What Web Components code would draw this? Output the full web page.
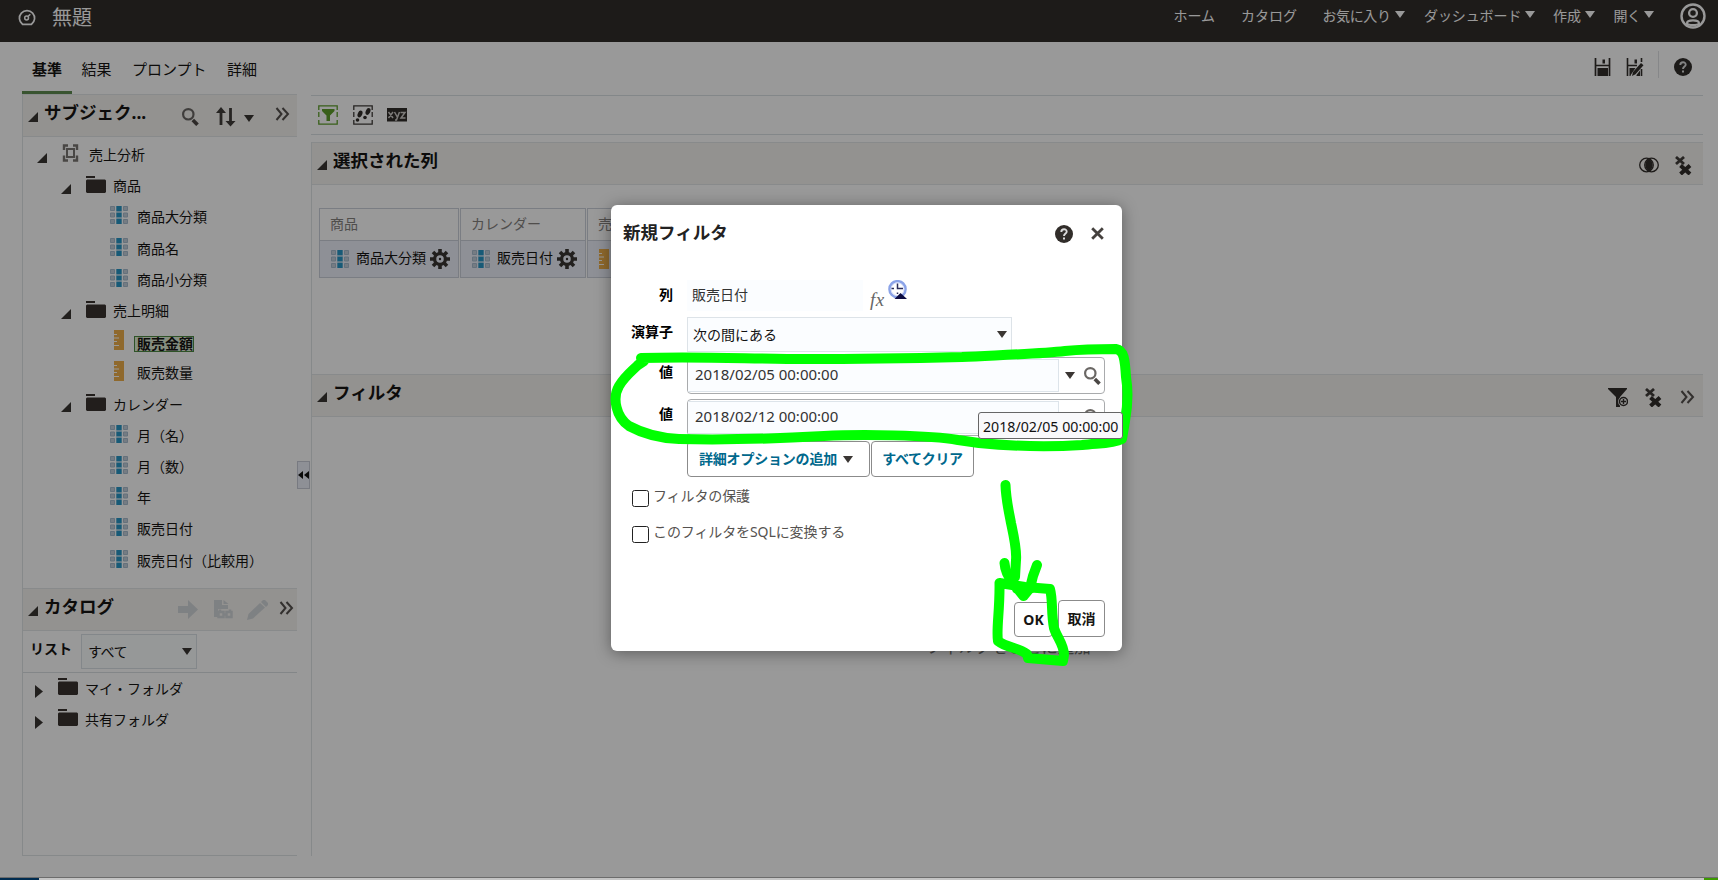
<!DOCTYPE html>
<html lang="ja">
<head>
<meta charset="utf-8">
<title>無題</title>
<style>
  html, body { margin: 0; height: 880px; overflow: hidden; background: #fff; }
  body { font: 14px/20px "Noto Sans", "Noto Sans CJK JP", sans-serif; color: #161513; }
</style>
</head>
<body>
<analysis-app></analysis-app>

<script>
const ICONS = {
  gauge: [18, 17, '<path d="M4.5 15.3A7.6 7.6 0 1 1 13.5 15.3Z" fill="none" stroke="#fff" stroke-width="1.7"/><circle cx="8.6" cy="9" r="1.9" fill="none" stroke="#fff" stroke-width="1.5"/><path d="M10 7.500l2.300-2.300" stroke="#fff" stroke-width="1.6"/>'],
  user: [26, 26, '<circle cx="13" cy="13" r="11.500" fill="none" stroke="#fff" stroke-width="2.400"/><circle cx="13" cy="10" r="3.900" fill="none" stroke="#fff" stroke-width="2.300"/><path d="M7 20.300c0-4 12-4 12 0-1 2.400-11 2.400-12 0z" fill="none" stroke="#fff" stroke-width="2.200"/>'],
  save: [18, 18, '<path d="M1.500 0v18M15.500 0v18M1 7.500h15" stroke="#312d2a" stroke-width="1.700"/><path d="M8.500 1.500h2.500v4H8.500zM3.500 10h10.500v8H3.500z" fill="#312d2a"/>'],
  saveas: [18, 18, '<path d="M1.500 0v18M15.500 0v4M15.500 11v7M1 7.500h10" stroke="#312d2a" stroke-width="1.600"/><path d="M8.500 1.500h2.500v4H8.500zM3.500 10h6L5 16.500 4.500 18h-1z" fill="#312d2a"/><path d="M6 18l1-4 8-9 2.500 2.200-8 9zM10.500 17l3.500-4.500V18h-3.500z" fill="#312d2a"/>'],
  help: [18, 18, '<circle cx="9" cy="9" r="9" fill="#312d2a"/><path d="M6.300 7c0-3.700 5.600-3.500 5.400-.3C11.600 8.500 9 8.500 9 11" fill="none" stroke="#ddd" stroke-width="1.900"/><path d="M8 12.500h2v2H8z" fill="#ddd"/>'],
  search: [17, 18, '<circle cx="6.300" cy="6.300" r="5.200" fill="none" stroke="#6a6764" stroke-width="2.200"/><path d="M10.800 12l4.700 4.800" stroke="#4b4744" stroke-width="3.600"/>'],
  sort: [20, 20, '<path d="M5 18V3M14.500 1v16" stroke="#403c39" stroke-width="2.800"/><path d="M0 6L5 0l5 6zM9.500 14l5 5.500 5-5.500z" fill="#403c39"/>'],
  down: [10, 7, '<path d="M0 0h10L5 7z" fill="#3a3633"/>'],
  downw: [11, 7, '<path d="M0 0h10L5 7z" fill="#fff"/>'],
  more: [15, 14, '<path d="M1.500 1l5 6-5 6M7.500 1l5.500 6-5.500 6" fill="none" stroke="#55514e" stroke-width="2"/>'],
  open: [10, 10, '<path d="M10 0v10H0z" fill="#3a3633"/>'],
  shut: [8, 13, '<path d="M0 0l8 6.500L0 13z" fill="#3a3633"/>'],
  cube: [18, 18, '<path d="M2 6V1.500h4M11 1.500h4V6M15 11.500V16.500h-4M6 16.500H2v-5" fill="none" stroke="#7b7773" stroke-width="2.400"/><path d="M5 5h7v8H5z" fill="none" stroke="#7b7773" stroke-width="2"/>'],
  folder: [20, 17, '<path d="M0 0h9v2H0zM1 3.500h18l1 1V16l-1 1H1l-1-1V4.500z" fill="#3a3330"/>'],
  column: [18, 18, [0, 6.5, 13].map(y => `<path d="M.5 ${y + .5}h4v4h-4zM13.500 ${y + .5}h4v4h-4z" fill="#c3cfda" stroke="#a8bdcf"/><path d="M6.300 ${y}h5.400v5h-5.400z" fill="#2797c6"/>`).join('') + '<path d="M6.300 5h5.400v1.500H6.300zM6.300 11.500h5.400v1.500H6.300z" fill="#a3cfe6"/>'],
  ruler: [10, 20, '<path d="M0 0h10v20H0z" fill="#eeb04c"/><path d="M0 4.500h3M0 8h5M0 11.500h3M0 15.500h5" stroke="#fff" stroke-width="1.200"/>'],
  goto: [20, 19, '<path d="M0 6h10V0l10 9.500L10 19v-6H0z" fill="#d3d7da"/>'],
  preview: [20, 20, '<path d="M0 0h8v5h6v4H4v8H0z" fill="#d3d7da"/><path d="M9.500 0l5 4h-5z" fill="#d3d7da"/><path d="M4.500 12h5v5h-5zM12.500 12h5v5h-5zM6 12V9.500M16 12V9.500M9 14.500h4" fill="none" stroke="#d3d7da" stroke-width="2.500"/>'],
  pencil: [21, 20, '<path d="M0 20l1.500-6L13 3l5 4.500L6 18.500zM14 2l2-2h2l3 3v2l-2 2z" fill="#d3d7da"/>'],
  filter: [20, 20, '<path d="M.8 5V.8h18.400V5M.8 15v4.200h18.400V15M.8 7v5M19.200 7v5" fill="none" stroke="#5f9f2c" stroke-width="1.300"/><path d="M4 4h12.500v2L12 10.500V16H8.500v-5.500L4 6z" fill="#5f9f2c"/>'],
  steps: [20, 20, '<path d="M.8 5V.8h18.400V5M.8 15v4.200h18.400V15M.8 7v5M19.200 7v5" fill="none" stroke="#403c39" stroke-width="1.300"/><g fill="#312d2a"><ellipse cx="7" cy="9" rx="2.200" ry="3.500" transform="rotate(25 7 9)"/><ellipse cx="15" cy="6.500" rx="2.200" ry="3.500" transform="rotate(25 15 6.500)"/><circle cx="4.500" cy="15" r="1.800"/><circle cx="12" cy="12.500" r="1.800"/></g>'],
  xyz: [20, 14, '<path d="M0 0h20v13.500H0z" fill="#312d2a"/><path d="M1.500 4l4.500 6M6 4l-4.500 6M7.500 4l2.800 5M12.500 4L9.500 12H8M13.500 4.500h4.500L14 10h4.500" fill="none" stroke="#d0cdca" stroke-width="1.500"/>'],
  venn: [20, 16, '<circle cx="7.500" cy="8" r="6.800" fill="none" stroke="#312d2a" stroke-width="1.300"/><circle cx="12.500" cy="8" r="6.800" fill="none" stroke="#312d2a" stroke-width="1.300"/><path d="M10 1.800c5 3 5 9.400 0 12.400-5-3-5-9.400 0-12.400z" fill="#312d2a"/>'],
  clear: [17, 19, '<path d="M1 1l8 7M9 1L1 8" stroke="#403c39" stroke-width="2.800"/><path d="M5.500 9.500l9.500 8.500M15 9.500L5.500 18" stroke="#312d2a" stroke-width="4"/>'],
  gear: [20, 20, '<circle cx="10" cy="10" r="5.400" fill="none" stroke="#3a3633" stroke-width="3.300"/><path d="M10 0v4M10 16v4M0 10h4M16 10h4M3 3l3 3M14 14l3 3M17 3l-3 3M6 14l-3 3" stroke="#3a3633" stroke-width="3.600"/><circle cx="10" cy="10" r="1.200" fill="#312d2a"/>'],
  funnel: [20, 20, '<path d="M0 0h19v1l-7 8v10H8V9L0 1z" fill="#312d2a"/><circle cx="15.500" cy="13.500" r="5.400" fill="#f5f4f2"/><circle cx="15.500" cy="13.500" r="4" fill="none" stroke="#312d2a" stroke-width="1.500"/><path d="M13 13.500h5M15.500 11v5" stroke="#312d2a" stroke-width="1.400"/>'],
  close: [13, 13, '<path d="M1.200 1.200l10.600 10.600M11.800 1.200L1.200 11.800" stroke="#45413e" stroke-width="2.800"/>'],
  clock: [19, 19, '<circle cx="9.500" cy="9.200" r="8" fill="#fff" stroke="#8ba3e8" stroke-width="2.600"/><circle cx="9.500" cy="9.200" r="6.500" fill="none" stroke="#d5ddf8"/><path d="M9.500 3.500v5h5.500M3.500 8.500h2.500M9.500 14v-1.500" fill="none" stroke="#2b2c5a" stroke-width="1.500"/><path d="M6.500 19l6-6 6.500 6z" fill="#0c0c42"/>'],
  splitter: [11, 8, '<path d="M5 0v8L0 4zM11 0v8L6 4z" fill="#111"/>']
};

function define(name, render) {
  customElements.define(name, class extends HTMLElement {
    constructor() {
      super();
      this.attachShadow({ mode: "open" });
    }
    connectedCallback() {
      this.shadowRoot.innerHTML = render(this);
    }
  });
}

define("ui-icon", (el) => {
  const [w, h, body] = ICONS[el.getAttribute("name")];
  return `
    <style>:host { display: block; flex: none; width: ${w}px; height: ${h}px; } svg { display: block; }</style>
    <svg width="${w}" height="${h}" viewBox="0 0 ${w} ${h}">${body}</svg>`;
});

define("nav-item", (el) => `
  <style>
    :host { display: flex; align-items: center; box-sizing: border-box; flex: none; white-space: nowrap; color: #fff; }
    ui-icon { margin: -3px 0 0 4px; }
  </style>
  <slot></slot>${el.hasAttribute("menu") ? '<ui-icon name="downw"></ui-icon>' : ""}`);

define("app-header", () => `
  <style>
    :host { display: flex; height: 42px; box-sizing: border-box; background: #312d2a; padding: 0 12px 10px 18px; align-items: center; }
    h1 { margin: 3px auto 0 16px; font-size: 20px; font-weight: 400; line-height: 24px; color: #fff; }
    ui-icon[name=gauge] { margin-top: 3px; }
    ui-icon[name=user] { margin-top: -1px; }
    .w1 { width: 67.500px; } .w2 { width: 81.500px; }
    .w3 { width: 101.500px; letter-spacing: -.4px; } .w4 { width: 129px; letter-spacing: -.1px; }
    .w5 { width: 60.500px; } .w6 { width: 66.500px; letter-spacing: -.6px; }
    nav { display: flex; }
  </style>
  <ui-icon name="gauge"></ui-icon>
  <h1>無題</h1>
  <nav>
    <nav-item class="w1">ホーム</nav-item>
    <nav-item class="w2">カタログ</nav-item>
    <nav-item class="w3" menu>お気に入り</nav-item>
    <nav-item class="w4" menu>ダッシュボード</nav-item>
    <nav-item class="w5" menu>作成</nav-item>
    <nav-item class="w6" menu>開く</nav-item>
  </nav>
  <ui-icon name="user"></ui-icon>`);

define("tab-bar", () => `
  <style>
    :host { display: flex; height: 52px; box-sizing: border-box; padding: 0 26px 0 22px; font-size: 15px; }
    span { height: 52px; box-sizing: border-box; line-height: 54px; margin-right: 20.500px; white-space: nowrap; }
    .on { width: 50px; margin-right: 9.500px; text-align: center; font-weight: 700; border-bottom: 3px solid #5f8c50; }
    .tools { display: flex; align-items: center; margin-left: auto; padding-bottom: 3px; }
    i { width: 1px; height: 27px; background: #dfe2e4; margin: -4px 15px 0 14px; }
  </style>
  <span class="on">基準</span><span>結果</span><span>プロンプト</span><span>詳細</span>
  <div class="tools">
    <ui-icon name="save"></ui-icon>
    <ui-icon name="saveas" style="margin-left:14px"></ui-icon>
    <i></i>
    <ui-icon name="help"></ui-icon>
  </div>`);

define("section-head", () => `
  <style>
    :host { display: flex; align-items: center; height: 43px; box-sizing: border-box; padding: 0 9px 0 5px; background: #f5f3f0; border: solid #e3e6e8; border-width: 1px 0; }
    ui-icon { margin: 2px 6px 0 0; }
    b { font-size: 17.500px; line-height: 24px; padding-bottom: 7px; white-space: nowrap; }
    .tools { display: flex; align-items: center; margin-left: auto; }
  </style>
  <ui-icon name="open"></ui-icon>
  <b><slot></slot></b>
  <div class="tools"><slot name="tools"></slot></div>`);

define("tree-row", (el) => {
  const kind = el.getAttribute("kind");
  const leaf = kind === "column" || kind === "ruler";
  return `
    <style>
      :host { display: flex; align-items: center; height: 31.200px; box-sizing: border-box; white-space: nowrap; padding-left: ${el.getAttribute("indent")}px; }
      .tw { width: ${leaf ? 0 : el.hasAttribute("closed") ? 23 : 25}px; display: flex; margin-top: 5px; }
      .ic { width: 27px; display: flex; justify-content: ${kind === "ruler" ? "center" : "flex-start"}; margin-top: -4px; }
      .ruler { box-sizing: border-box; padding-right: 9px; }
      .mark { font-weight: 700; line-height: 14px; height: 14px; border: 1px solid #4f8a44; background: #dfeed6; padding-left: 2px; margin: 3px 0 0 -3px; }
    </style>
    <div class="tw">${leaf ? "" : `<ui-icon name="${el.hasAttribute("closed") ? "shut" : "open"}"></ui-icon>`}</div>
    <div class="ic ${kind}"><ui-icon name="${kind}"></ui-icon></div>
    <span class="${el.hasAttribute("marked") ? "mark" : ""}"><slot></slot></span>`;
});

define("subject-pane", () => `
  <style>
    :host { display: flex; flex-direction: column; height: 494px; box-sizing: border-box; border-left: 1px solid #e0e4e6; }
    section-head { flex: none; }
    .tree { padding-top: 2.500px; }
  </style>
  <section-head>サブジェク...
    <ui-icon slot="tools" name="search" style="margin-top:2px"></ui-icon>
    <ui-icon slot="tools" name="sort" style="margin:2px 0 0 17px"></ui-icon>
    <ui-icon slot="tools" name="down" style="margin:5px 0 0 8px"></ui-icon>
    <ui-icon slot="tools" name="more" style="margin:-3px -2px 0 21px"></ui-icon>
  </section-head>
  <div class="tree">
    <tree-row kind="cube" indent="14">売上分析</tree-row>
    <tree-row kind="folder" indent="38">商品</tree-row>
    <tree-row kind="column" indent="87">商品大分類</tree-row>
    <tree-row kind="column" indent="87">商品名</tree-row>
    <tree-row kind="column" indent="87">商品小分類</tree-row>
    <tree-row kind="folder" indent="38">売上明細</tree-row>
    <tree-row kind="ruler" indent="87" marked>販売金額</tree-row>
    <tree-row kind="ruler" indent="87">販売数量</tree-row>
    <tree-row kind="folder" indent="38">カレンダー</tree-row>
    <tree-row kind="column" indent="87">月（名）</tree-row>
    <tree-row kind="column" indent="87">月（数）</tree-row>
    <tree-row kind="column" indent="87">年</tree-row>
    <tree-row kind="column" indent="87">販売日付</tree-row>
    <tree-row kind="column" indent="87">販売日付（比較用）</tree-row>
  </div>`);

define("catalog-pane", () => `
  <style>
    :host { display: flex; flex-direction: column; height: 268px; box-sizing: border-box; border: solid #e0e4e6; border-width: 0 0 1px 1px; }
    section-head { flex: none; }
    .list { display: flex; height: 42px; box-sizing: border-box; border-bottom: 1px solid #dbe0e3; padding: 3px 0 0 7px; }
    b { width: 51px; line-height: 29px; }
    .sel { display: flex; align-items: center; width: 116px; height: 35px; box-sizing: border-box; padding: 0 4px 0 6px; justify-content: space-between; border: 1px solid #dbe1e6; background: #fbfdfe; letter-spacing: -.5px; }
    .tree { padding-top: 0; }
  </style>
  <section-head>カタログ
    <ui-icon slot="tools" name="goto"></ui-icon>
    <ui-icon slot="tools" name="preview" style="margin-left:16px"></ui-icon>
    <ui-icon slot="tools" name="pencil" style="margin-left:13px"></ui-icon>
    <ui-icon slot="tools" name="more" style="margin:-4px -6px 0 11px"></ui-icon>
  </section-head>
  <div class="list"><b>リスト</b><div class="sel">すべて<ui-icon name="down"></ui-icon></div></div>
  <div class="tree">
    <tree-row kind="folder" closed indent="12">マイ・フォルダ</tree-row>
    <tree-row kind="folder" closed indent="12">共有フォルダ</tree-row>
  </div>`);

define("column-card", (el) => `
  <style>
    :host { display: block; width: ${el.getAttribute("width")}px; height: 70px; box-sizing: border-box; border: 1px solid #ccd1da; flex: none; white-space: nowrap; overflow: hidden; }
    .top { height: 32px; line-height: 30px; box-sizing: border-box; padding-left: 10px; border-bottom: 1px solid #ccd1da; color: #85827f; }
    .bot { display: flex; align-items: center; height: 36px; background: #edf1fa; padding-left: 11px; }
    .bot span { padding: 0 4px 3px 7px; }
  </style>
  <div class="top">${el.getAttribute("folder")}</div>
  <div class="bot"><ui-icon name="${el.getAttribute("kind")}"></ui-icon>${el.textContent ? '<span><slot></slot></span><ui-icon name="gear"></ui-icon>' : ""}</div>`);

define("criteria-pane", () => `
  <style>
    :host { display: block; height: 762px; }
    .bar { display: flex; align-items: center; height: 40px; box-sizing: border-box; border: solid #dbe1e4; border-width: 1px 0; margin-top: 1px; padding-left: 7px; gap: 15px; }
    .body { border-left: 1px solid #e0e4e6; margin-top: 7px; height: 714px; }
    .cards { display: flex; gap: 1px; height: 189px; box-sizing: border-box; padding: 23px 0 0 7px; }
  </style>
  <div class="bar"><ui-icon name="filter"></ui-icon><ui-icon name="steps"></ui-icon><ui-icon name="xyz" style="margin-left:-1px"></ui-icon></div>
  <div class="body">
    <section-head>選択された列
      <ui-icon slot="tools" name="venn" style="margin-top:2px"></ui-icon>
      <ui-icon slot="tools" name="clear" style="margin:4px 2px 0 16px"></ui-icon>
    </section-head>
    <div class="cards">
      <column-card width="140" folder="商品" kind="column">商品大分類</column-card>
      <column-card width="126" folder="カレンダー" kind="column">販売日付</column-card>
      <column-card width="60" folder="売" kind="ruler"></column-card>
    </div>
    <section-head>フィルタ
      <ui-icon slot="tools" name="funnel" style="margin-top:4px"></ui-icon>
      <ui-icon slot="tools" name="clear" style="margin:3px 0 0 17px"></ui-icon>
      <ui-icon slot="tools" name="more" style="margin:2px -1px 0 18px"></ui-icon>
    </section-head>
  </div>`);

define("push-button", () => `
  <style>
    :host { display: flex; align-items: center; justify-content: center; box-sizing: border-box; border: 1px solid #8b8b8b; border-radius: 4px; background: #fff; font-weight: 700; white-space: nowrap; }
  </style><slot></slot>`);

define("form-row", (el) => `
  <style>
    :host { display: flex; }
    b { width: 62px; margin-right: 14px; text-align: right; color: #000; line-height: 30px; flex: none; }
  </style><b>${el.getAttribute("label")}</b><slot></slot>`);

define("value-box", () => `
  <style>
    :host { display: flex; align-items: center; width: 418px; height: 37px; box-sizing: border-box; border: 1px solid #a9abad; border-radius: 4px; font-size: 15px; color: #333; }
    span { width: 371px; height: 33px; line-height: 28px; box-sizing: border-box; padding-left: 7px; background: #fbfdff; border: solid #dde4ea; border-width: 1px 1px 1px 0; }
    ui-icon { margin-left: 6px; } ui-icon + ui-icon { margin-left: 9px; }
  </style>
  <span><slot></slot></span><ui-icon name="down"></ui-icon><ui-icon name="search"></ui-icon>`);

define("check-line", () => `
  <style>
    :host { display: flex; align-items: center; color: #55524f; height: 36px; }
    i { width: 17px; height: 17px; box-sizing: border-box; border: 1px solid #222; border-radius: 2.500px; margin-right: 4px; }
    span { padding-bottom: 4px; letter-spacing: -.1px; }
  </style><i></i><span><slot></slot></span>`);

define("filter-dialog", () => `
  <style>
    :host { display: block; width: 511px; height: 446px; box-sizing: border-box; background: #fff; border-radius: 6px; box-shadow: 0 2px 16px rgba(0, 0, 0, .4); }
    header { display: flex; align-items: center; height: 57px; padding: 0 18px 0 12px; }
    header b { font-size: 17.500px; color: #222; margin: 0 auto 3px 0; }
    .col { display: flex; align-items: center; width: 176px; height: 31px; box-sizing: border-box; padding: 0 0 2px 5px; background: #fbfdff; color: #333; }
    em { font: italic 19px/20px "Liberation Serif", serif; color: #666; margin: 10px 3px 0 7px; width: 15px; letter-spacing: .5px; }
    .op { display: flex; align-items: center; justify-content: space-between; width: 325px; height: 35px; box-sizing: border-box; padding: 0 4px 0 5px; border: 1px solid #dde3e8; background: #fbfdff; color: #111; }
    .row1 { margin-top: 18px; height: 37px; }
    .row2 { height: 40px; } .row3 { height: 42px; } .row4 { height: 42px; }
    .opts { display: flex; gap: 1px; margin: 0 0 3px 76px; color: #00688c; }
    .opts push-button { height: 36px; }
    .checks { padding-left: 21px; }
    footer { display: flex; justify-content: flex-end; align-items: flex-end; margin-top: 48px; padding-right: 17px; gap: 5px; color: #161513; }
  </style>
  <header><b>新規フィルタ</b><ui-icon name="help"></ui-icon><ui-icon name="close" style="margin-left:18px"></ui-icon></header>
  <form-row class="row1" label="列"><div class="col">販売日付</div><em>fx</em><ui-icon name="clock"></ui-icon></form-row>
  <form-row class="row2" label="演算子"><div class="op">次の間にある<ui-icon name="down"></ui-icon></div></form-row>
  <form-row class="row3" label="値"><value-box>2018/02/05 00:00:00</value-box></form-row>
  <form-row class="row4" label="値"><value-box>2018/02/12 00:00:00</value-box></form-row>
  <div class="opts">
    <push-button style="width:183px;padding-right:5px;letter-spacing:-.2px">詳細オプションの追加<ui-icon name="down" style="margin-left:6px"></ui-icon></push-button>
    <push-button style="width:103px;letter-spacing:-.3px">すべてクリア</push-button>
  </div>
  <div class="checks"><check-line>フィルタの保護</check-line><check-line>このフィルタをSQLに変換する</check-line></div>
  <footer>
    <push-button style="width:39px;height:35px">OK</push-button>
    <push-button style="width:47px;height:37px">取消</push-button>
  </footer>`);

// hand drawn marker strokes
define("marker-layer", () => `
  <style>:host { display: block; } svg { display: block; }</style>
  <svg width="1718" height="880" fill="none" stroke="#0f0" stroke-width="10" stroke-linecap="round" stroke-linejoin="round">
    <path d="M644 361 L641 358 C700 356 750 359 806 359 C870 359 920 358 962 357 C1000 355 1040 354 1065 351 C1085 349 1100 349 1116 349 C1124 350 1125 360 1126 377 C1129 395 1127 410 1125 421 L1122 439 C1112 444 1098 443 1082 445 C1050 447 1010 446 979 443 L958 440 C930 435 860 434 824 436 C770 439 720 440 679 439 C655 438 640 432 629 426 C616 417 612 398 619 386 C625 376 633 370 638 365 Z"/>
    <path d="M1005.500 485 C1006 500 1009 512 1011 523 C1014 537 1017 550 1016 560 L1015 577"/>
    <path d="M1004.500 563 C1005 571 1009 578 1013 583 L1023.500 596 L1030 588 L1033 576 L1037 565 M1017 589h13"/>
    <path d="M999.500 583 L1025 587 L1050 589 C1053 600 1051 613 1054 628 C1057 638 1064 644 1064 655 L1063 661 L1028 658 L1027 654 C1017 647 1007 648 998 641 C996 630 1000 610 999.500 583"/>
  </svg>`);

define("analysis-app", () => `
  <style>
    :host { display: block; position: relative; width: 1718px; height: 880px; overflow: hidden; }
    main { display: flex; height: 783px; padding: 0 15px 0 22px; }
    .left { width: 275px; }
    .split { display: flex; align-items: center; width: 14px; height: 763px; }
    .split div { display: flex; align-items: center; justify-content: center; width: 13px; height: 28px; box-sizing: border-box; border: 1px solid #c9ccd8; background: #edf0fa; margin-top: -1px; }
    criteria-pane { flex: 1; }
    .hint { position: absolute; left: 926px; top: 637px; font-size: 16.500px; color: #777; white-space: nowrap; }
    .shade { position: absolute; inset: 0 0 3px; background: rgba(0, 0, 0, .4); }
    filter-dialog { position: absolute; left: 611px; top: 205px; }
    .tip { position: absolute; left: 978px; top: 412px; width: 145px; height: 27px; box-sizing: border-box; border: 1px solid #666; border-radius: 3px; background: #f9f9fb; line-height: 27px; padding-left: 4px; font-size: 14.200px; color: #111; white-space: nowrap; }
    marker-layer { position: absolute; inset: 0; }
    .task { display: flex; justify-content: space-between; height: 2px; background: #c4c4c4; border-top: 1px solid #6c6c6c; }
    .task i { width: 39px; background: #002c50; } .task i + i { width: 14px; background: #3c9a00; }
  </style>
  <app-header></app-header>
  <tab-bar></tab-bar>
  <main>
    <div class="left"><subject-pane></subject-pane><catalog-pane></catalog-pane></div>
    <div class="split"><div><ui-icon name="splitter"></ui-icon></div></div>
    <criteria-pane></criteria-pane>
  </main>
  <div class="task"><i></i><i></i></div>
  <div class="hint">フィルタをここに追加</div>
  <div class="shade"></div>
  <filter-dialog></filter-dialog>
  <marker-layer></marker-layer>
  <div class="tip">2018/02/05 00:00:00</div>`);
</script>
</body>
</html>
